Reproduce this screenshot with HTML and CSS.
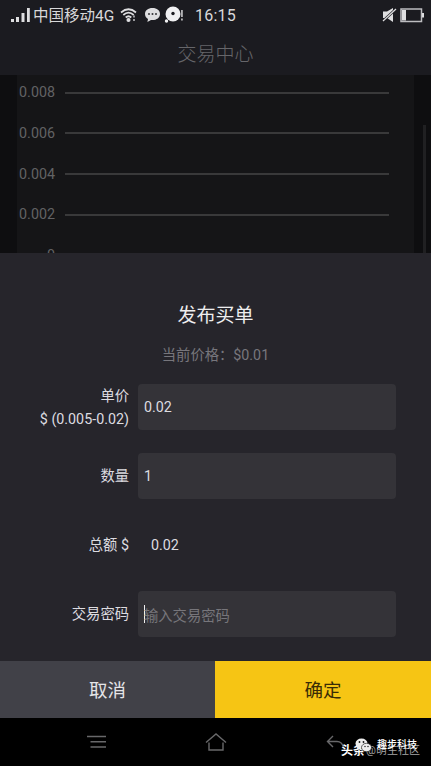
FILE: index.html
```html
<!DOCTYPE html>
<html lang="zh-CN">
<head>
<meta charset="utf-8">
<title>交易中心</title>
<link rel="stylesheet" href="styles.css">
</head>
<body>
<div class="screen">
  <header class="status">
    <svg class="signal" width="20" height="16" viewBox="0 0 20 16" fill="#dedee0"><path d="M0 12h3v3H0zM5 10h3v5H5zM10.500 6h3v9h-3zM16 1h2.800v14H16z"/></svg>
    <span class="carrier">中国移动4G</span>
    <svg class="wifi" width="18" height="16" viewBox="0 0 18 16" fill="none" stroke="#dedee0" stroke-width="1.700"><path d="M1 5.500Q8.500-1 16 5.500M3.300 8Q8.500 3.300 13.700 8M5.700 10.500Q8.500 8 11.300 10.500"/><circle cx="8.500" cy="13" r="1.200" fill="#dedee0"/><path d="M14 8.500v2M14 12v2" stroke-width="1.300"/></svg>
    <svg class="chat" width="17" height="16" viewBox="0 0 17 16"><path d="M8.500 1C4 1 1 3.500 1 7c0 2.200 1.200 4 3 5l-.6 3L7 13c5 .6 9-2 9-6 0-3.500-3-6-7.500-6z" fill="#dedee0"/><g fill="#333337"><circle cx="5" cy="7" r="1"/><circle cx="8.500" cy="7" r="1"/><circle cx="12" cy="7" r="1"/></g></svg>
    <svg class="disc" width="20" height="18" viewBox="0 0 20 18"><g fill="#f0f0f2"><circle cx="9" cy="8" r="7.500"/><circle cx="2.500" cy="15" r="1.700"/><path d="M17.300 4h1.300v7h-1.300zM17.300 12.500h1.300V14.500h-1.300z"/></g><circle cx="9" cy="7.500" r="1.700" fill="#1b1b20"/></svg>
    <span class="clock">16:15</span>
    <svg class="mute" width="15" height="16" viewBox="0 0 15 16"><path d="M1 4.500h4l6-3.500v14l-6-4H1z" fill="#dedee0"/><path d="M1 14L14 2" stroke="#1b1b20" stroke-width="2.400"/><path d="M1 14L14 2" stroke="#dedee0" stroke-width="1.200"/></svg>
    <svg class="battery" width="25" height="15" viewBox="0 0 25 15"><path d="M1 1h20.500v12.500H1z" fill="none" stroke="#bdbdc0" stroke-width="1.500"/><path d="M2 2h4v10.500H2zM22 5h2v4.500h-2z" fill="#dedee0"/></svg>
  </header>
  <div class="title">交易中心</div>
  <main class="chart-area">
    <div class="chart">
      <div class="tick"><span>0.008</span><i></i></div>
      <div class="tick"><span>0.006</span><i></i></div>
      <div class="tick"><span>0.004</span><i></i></div>
      <div class="tick"><span>0.002</span><i></i></div>
      <div class="tick"><span>0</span></div>
    </div>
    <div class="scrollbar"></div>
  </main>
  <section class="sheet">
    <h1>发布买单</h1>
    <p class="price">当前价格：$0.01</p>
    <div class="form">
      <div class="label two">单价<br>$ (0.005-0.02)</div><div class="field">0.02</div>
      <div class="label">数量</div><div class="field">1</div>
      <div class="label">总额 $</div><div class="total">0.02</div>
      <div class="label">交易密码</div><div class="field hint"><i class="caret"></i>输入交易密码</div>
    </div>
  </section>
  <div class="actions"><div class="cancel">取消</div><div class="confirm">确定</div></div>
  <nav class="nav">
    <svg class="menu" width="20" height="14" viewBox="0 0 20 14" stroke="#68686a" stroke-width="1.400"><path d="M0 1.500h19M3.500 6.700H19M3.500 12H19"/></svg>
    <svg class="home" width="22" height="18" viewBox="0 0 22 18" fill="none" stroke="#68686a" stroke-width="1.400"><path d="M1 9.500L11 1l10 8.500M4 9.500V17h14V9.500"/></svg>
    <svg class="back" width="19" height="15" viewBox="0 0 19 15" fill="none" stroke="#68686a" stroke-width="1.400"><path d="M7 1L1.500 6.500 7 12M2 6.500h9q5 0 6.500 6"/></svg>
    <div class="mark-a"><b>头条</b><span>@萌生社区</span></div>
    <div class="mark-b">
      <svg width="17" height="15" viewBox="0 0 17 15"><ellipse cx="6.500" cy="5.500" rx="6" ry="5" fill="#eee"/><path d="M3 9l-1 3 4-2z" fill="#eee"/><ellipse cx="11.500" cy="9.500" rx="5" ry="4.200" fill="#eee" stroke="#000" stroke-width=".6"/><g fill="#111"><circle cx="4.500" cy="4" r=".9"/><circle cx="8.500" cy="4" r=".9"/><circle cx="10" cy="8.500" r=".7"/><circle cx="13" cy="8.500" r=".7"/></g></svg>
      <span>趣步科技</span>
    </div>
  </nav>
</div>
</body>
</html>
```
FILE: styles.css
```css
* { box-sizing: border-box; }
body { margin: 0; background: #000; font-family: Roboto, "Noto Sans CJK SC", sans-serif; }
svg { display: block; flex: none; }
.screen { width: 431px; height: 766px; display: flex; flex-direction: column; overflow: hidden; background: #1b1b20; white-space: nowrap; }
.status { height: 32px; flex: none; display: flex; align-items: center; padding: 0 6px 2px 11px; color: #d8d8da; font-size: 15.500px; }
.carrier { width: 84px; margin-left: 2px; line-height: 20px; padding-top: 1px; }
.wifi { margin-left: 3px; }
.chat { margin-left: 6px; }
.disc { margin-left: 3px; }
.clock { margin-left: 11px; font-size: 16px; letter-spacing: .2px; padding-top: 1px; }
.mute { margin-left: auto; }
.battery { margin-left: 3px; }
.title { height: 43px; flex: none; line-height: 45px; text-align: center; color: #66666a; font-size: 19px; font-weight: 300; }
.chart-area { height: 178px; flex: none; display: flex; justify-content: space-between; background: #0e0e10; padding: 0 5px 0 17px; overflow: hidden; }
.chart { width: 397px; height: 178px; background: #151517; overflow: hidden; }
.tick { height: 40.700px; display: flex; align-items: center; color: #626264; font-size: 14.300px; }
.tick:first-child { height: 35px; }
.tick:nth-child(2) { margin-top: 3px; }
.tick span { width: 38px; text-align: right; padding-bottom: 1px; }
.tick i { width: 324px; height: 2px; margin-left: 10px; background: #39393a; }
.scrollbar { width: 3px; margin-top: 50px; background: #202022; }
.sheet { height: 408px; flex: none; background: #26252b; }
h1 { margin: 0; padding-top: 49px; line-height: 28px; text-align: center; color: #eeeeef; font-size: 19px; font-weight: 400; }
.price { margin: 15px 0 18px; line-height: 21px; text-align: center; color: #77767c; font-size: 14.300px; }
.form { display: grid; grid-template-columns: 129px 258px; grid-auto-rows: 46px; column-gap: 9px; row-gap: 23px; align-items: center; font-size: 14.300px; color: #dddce0; }
.label { text-align: right; line-height: 23px; }
.label.two { padding-top: 2px; }
.field { height: 46px; display: flex; align-items: center; padding-left: 6px; border-radius: 4px; background: #343338; }
.total { padding-left: 13px; }
.hint { color: #77767b; }
.caret { width: 1px; height: 18px; background: #eee; margin-right: -1px; }
.actions { height: 57px; flex: none; display: grid; grid-template-columns: 215px 216px; line-height: 60px; text-align: center; font-size: 18.500px; }
.cancel { background: #414148; color: #e5e5e8; }
.confirm { background: #f6c514; color: #392c06; }
.nav { position: relative; height: 48px; flex: none; display: flex; align-items: center; background: #000; padding-left: 87px; }
.home { margin-left: 98px; }
.back { margin-left: 99px; }
.mark-a { position: absolute; left: 341px; top: 24px; display: flex; line-height: 18px; font-size: 11px; color: #a5a5a5; }
.mark-a b { color: #fff; font-size: 12px; margin-right: 1px; }
.mark-b { position: absolute; left: 355px; top: 18px; display: flex; align-items: center; line-height: 18px; color: #fff; font-size: 10px; }
.mark-b span { margin-left: 5px; font-weight: 500; }
```
